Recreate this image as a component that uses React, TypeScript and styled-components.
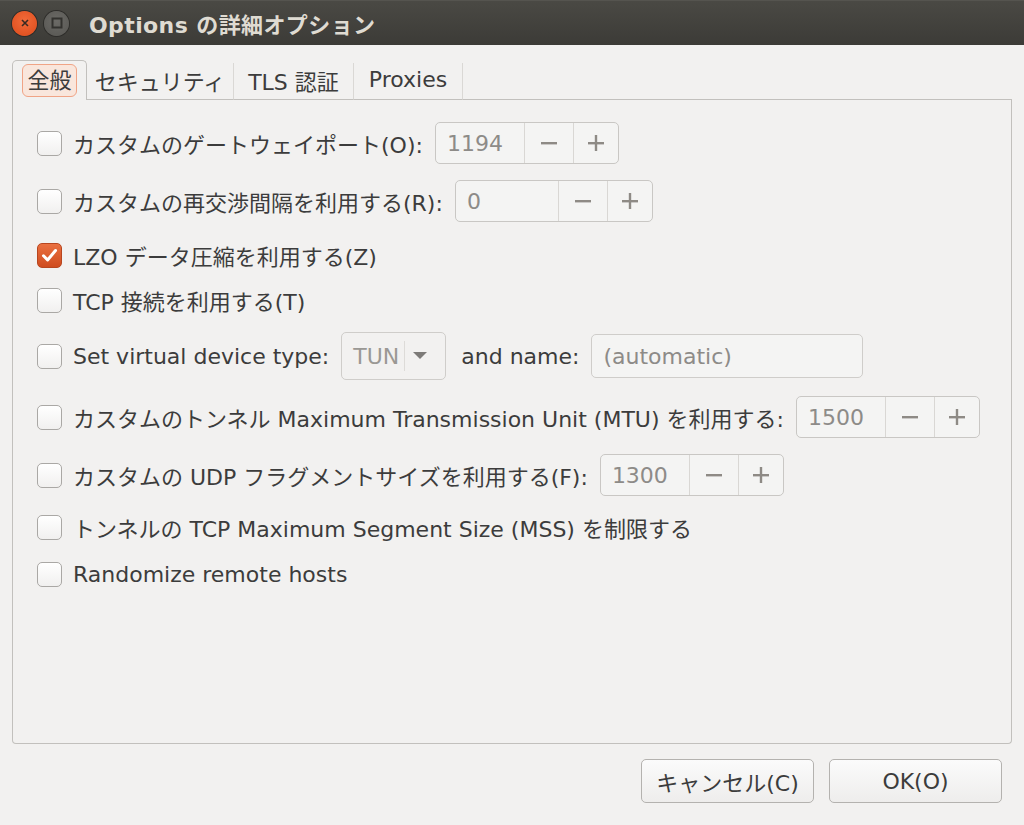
import React from "react";
import styled, { createGlobalStyle } from "styled-components";

const FONT = `"DejaVu Sans", "Noto Sans CJK JP", sans-serif`;

const GlobalStyle = createGlobalStyle`
  html, body { margin: 0; padding: 0; background: #f2f1f0; }
  body { font-family: ${FONT}; }
  * { box-sizing: border-box; }
`;

const Window = styled.div`
  width: 1024px;
  height: 825px;
  display: flex;
  flex-direction: column;
  background: #f2f1f0;
  overflow: hidden;
  font-family: ${FONT};
  font-size: 22px;
  color: #3c3c3c;
`;

const TitleBar = styled.div`
  height: 45px;
  flex: 0 0 45px;
  display: flex;
  align-items: center;
  padding-left: 12px;
  background: linear-gradient(#4a4944, #3c3b37);
  border-top: 1px solid #55544f;
`;

const WinButton = styled.div<{ $kind: "close" | "max" }>`
  width: 25px;
  height: 25px;
  border-radius: 50%;
  margin-right: 7px;
  display: flex;
  align-items: center;
  justify-content: center;
  background: ${(p) =>
    p.$kind === "close"
      ? "radial-gradient(circle at 50% 40%, #f26b3a, #dc4a1a)"
      : "radial-gradient(circle at 50% 40%, #6b6a66, #575652)"};
  box-shadow: 0 0 0 1px #2e2d2a;
`;

const Title = styled.div`
  margin-left: 13px;
  font-size: 22px;
  font-weight: 700;
  color: #dfdbd2;
  letter-spacing: 0.4px;
`;

const Body = styled.div`
  flex: 1;
  display: flex;
  flex-direction: column;
  padding: 15px 12px 0 12px;
`;

const TabBar = styled.div`
  display: flex;
  align-items: flex-end;
  height: 40px;
`;

const Tab = styled.div<{ $active?: boolean; $w: number }>`
  width: ${(p) => p.$w}px;
  height: ${(p) => (p.$active ? "40px" : "37px")};
  display: flex;
  align-items: center;
  justify-content: center;
  color: #3c3c3c;
  ${(p) =>
    p.$active
      ? `
    border: 1px solid #c2c0bd;
    border-bottom: none;
    border-radius: 5px 5px 0 0;
    padding-bottom: 1px;
  `
      : `
    border-bottom: 1px solid #c2c0bd;
    border-right: 1px solid #dad8d5;
    padding-bottom: 3px;
  `}
`;

const TabFiller = styled.div`
  flex: 1;
  height: 1px;
  background: #c2c0bd;
`;

const FocusLabel = styled.span`
  padding: 0 4px;
  border: 1px solid #f0a486;
  border-radius: 6px;
  background: #f9e6dc;
  line-height: 31px;
`;

const Frame = styled.div`
  height: 644px;
  border: 1px solid #c2c0bd;
  border-top: none;
  border-radius: 0 0 4px 4px;
  padding: 20px 0 0 24px;
  display: flex;
  flex-direction: column;
`;

const Row = styled.div<{ $h: number; $mt: number }>`
  height: ${(p) => p.$h}px;
  margin-top: ${(p) => p.$mt}px;
  display: flex;
  align-items: center;
  gap: 12px;
`;

const CheckBox = styled.div<{ $checked?: boolean }>`
  width: 25px;
  height: 25px;
  flex: 0 0 25px;
  border-radius: 5px;
  display: flex;
  align-items: center;
  justify-content: center;
  margin-right: -1px;
  ${(p) =>
    p.$checked
      ? `background: linear-gradient(#ea7040, #cf4c1f); border: 1px solid #b8461f;`
      : `background: linear-gradient(#ffffff, #f1f0ef); border: 1px solid #aaa8a5;`}
`;

const Label = styled.span<{ $ml?: number }>`
  color: #3c3c3c;
  white-space: nowrap;
  margin-left: ${(p) => p.$ml ?? 0}px;
`;

const Spin = styled.div<{ $entry: number }>`
  display: flex;
  height: 42px;
  border: 1px solid #c9c7c4;
  border-radius: 5px;
  background: #f4f4f3;
  & > :first-child {
    width: ${(p) => p.$entry}px;
  }
`;

const SpinEntry = styled.div`
  display: flex;
  align-items: center;
  padding-left: 11px;
  color: #8d8b88;
  border-right: 1px solid #d9d7d4;
`;

const SpinBtn = styled.div<{ $last?: boolean }>`
  width: ${(p) => (p.$last ? "44px" : "49px")};
  display: flex;
  align-items: center;
  justify-content: center;
  ${(p) => (p.$last ? "" : "border-right: 1px solid #d9d7d4;")}
`;

const Combo = styled.div`
  height: 48px;
  width: 105px;
  display: flex;
  align-items: center;
  border: 1px solid #cfcdca;
  border-radius: 5px;
  background: #f2f1f0;
  padding-left: 11px;
  color: #9a9894;
`;

const ComboSep = styled.div`
  width: 1px;
  height: 30px;
  background: #dddbd8;
  margin: 0 8px 0 5px;
`;

const TextEntry = styled.div`
  width: 272px;
  height: 44px;
  display: flex;
  align-items: center;
  padding-left: 11px;
  border: 1px solid #cfcdca;
  border-radius: 5px;
  background: #f4f4f3;
  color: #8d8b88;
`;

const Footer = styled.div`
  display: flex;
  justify-content: flex-end;
  gap: 15px;
  padding: 15px 10px 0 0;
`;

const Button = styled.div`
  width: 173px;
  height: 44px;
  display: flex;
  align-items: center;
  justify-content: center;
  border: 1px solid #b4b2af;
  border-radius: 5px;
  background: linear-gradient(#fbfbfb, #eeedec);
  color: #3c3c3c;
`;

const Minus = () => (
  <svg width="18" height="18" viewBox="0 0 18 18">
    <rect x="1" y="8" width="16" height="2.4" fill="#8e8a85" />
  </svg>
);
const Plus = () => (
  <svg width="18" height="18" viewBox="0 0 18 18">
    <rect x="1" y="8" width="16" height="2.4" fill="#8e8a85" />
    <rect x="7.8" y="1" width="2.4" height="16" fill="#8e8a85" />
  </svg>
);

const SpinBox = ({ value, entry }: { value: string; entry: number }) => (
  <Spin $entry={entry}>
    <SpinEntry>{value}</SpinEntry>
    <SpinBtn>
      <Minus />
    </SpinBtn>
    <SpinBtn $last>
      <Plus />
    </SpinBtn>
  </Spin>
);

const Check = ({ checked }: { checked?: boolean }) => (
  <CheckBox $checked={checked}>
    {checked && (
      <svg width="17" height="17" viewBox="0 0 17 17">
        <path d="M2.5 8.8 L6.6 13 L14.5 3.5" stroke="#fff" strokeWidth="3" fill="none" strokeLinecap="round" strokeLinejoin="round" />
      </svg>
    )}
  </CheckBox>
);

export default function App() {
  return (
    <>
      <GlobalStyle />
      <Window>
        <TitleBar>
          <WinButton $kind="close">
            <svg width="10" height="10" viewBox="0 0 10 10">
              <path d="M2 2 L8 8 M8 2 L2 8" stroke="#3a2a22" strokeWidth="1.6" />
            </svg>
          </WinButton>
          <WinButton $kind="max">
            <svg width="12" height="12" viewBox="0 0 12 12">
              <rect x="1.5" y="1.5" width="9" height="9" fill="none" stroke="#33322f" strokeWidth="2" />
            </svg>
          </WinButton>
          <Title>Options の詳細オプション</Title>
        </TitleBar>
        <Body>
          <TabBar>
            <Tab $active $w={75}>
              <FocusLabel>全般</FocusLabel>
            </Tab>
            <Tab $w={147}>セキュリティ</Tab>
            <Tab $w={120}>TLS 認証</Tab>
            <Tab $w={109}>Proxies</Tab>
            <TabFiller />
          </TabBar>
          <Frame>
            <Row $h={46} $mt={0}>
              <Check />
              <Label>カスタムのゲートウェイポート(O):</Label>
              <SpinBox value="1194" entry={89} />
            </Row>
            <Row $h={46} $mt={12}>
              <Check />
              <Label>カスタムの再交渉間隔を利用する(R):</Label>
              <SpinBox value="0" entry={103} />
            </Row>
            <Row $h={40} $mt={11}>
              <Check checked />
              <Label>LZO データ圧縮を利用する(Z)</Label>
            </Row>
            <Row $h={40} $mt={5}>
              <Check />
              <Label>TCP 接続を利用する(T)</Label>
            </Row>
            <Row $h={48} $mt={12}>
              <Check />
              <Label>Set virtual device type:</Label>
              <Combo>
                TUN
                <ComboSep />
                <svg width="14" height="8" viewBox="0 0 14 8">
                  <path d="M0 0 H14 L7 7 Z" fill="#7d7b78" />
                </svg>
              </Combo>
              <Label $ml={3}>and name:</Label>
              <TextEntry>(automatic)</TextEntry>
            </Row>
            <Row $h={46} $mt={14}>
              <Check />
              <Label>カスタムのトンネル Maximum Transmission Unit (MTU) を利用する:</Label>
              <SpinBox value="1500" entry={89} />
            </Row>
            <Row $h={46} $mt={12}>
              <Check />
              <Label>カスタムの UDP フラグメントサイズを利用する(F):</Label>
              <SpinBox value="1300" entry={89} />
            </Row>
            <Row $h={40} $mt={9}>
              <Check />
              <Label>トンネルの TCP Maximum Segment Size (MSS) を制限する</Label>
            </Row>
            <Row $h={40} $mt={7}>
              <Check />
              <Label>Randomize remote hosts</Label>
            </Row>
          </Frame>
          <Footer>
            <Button>キャンセル(C)</Button>
            <Button>OK(O)</Button>
          </Footer>
        </Body>
      </Window>
    </>
  );
}
